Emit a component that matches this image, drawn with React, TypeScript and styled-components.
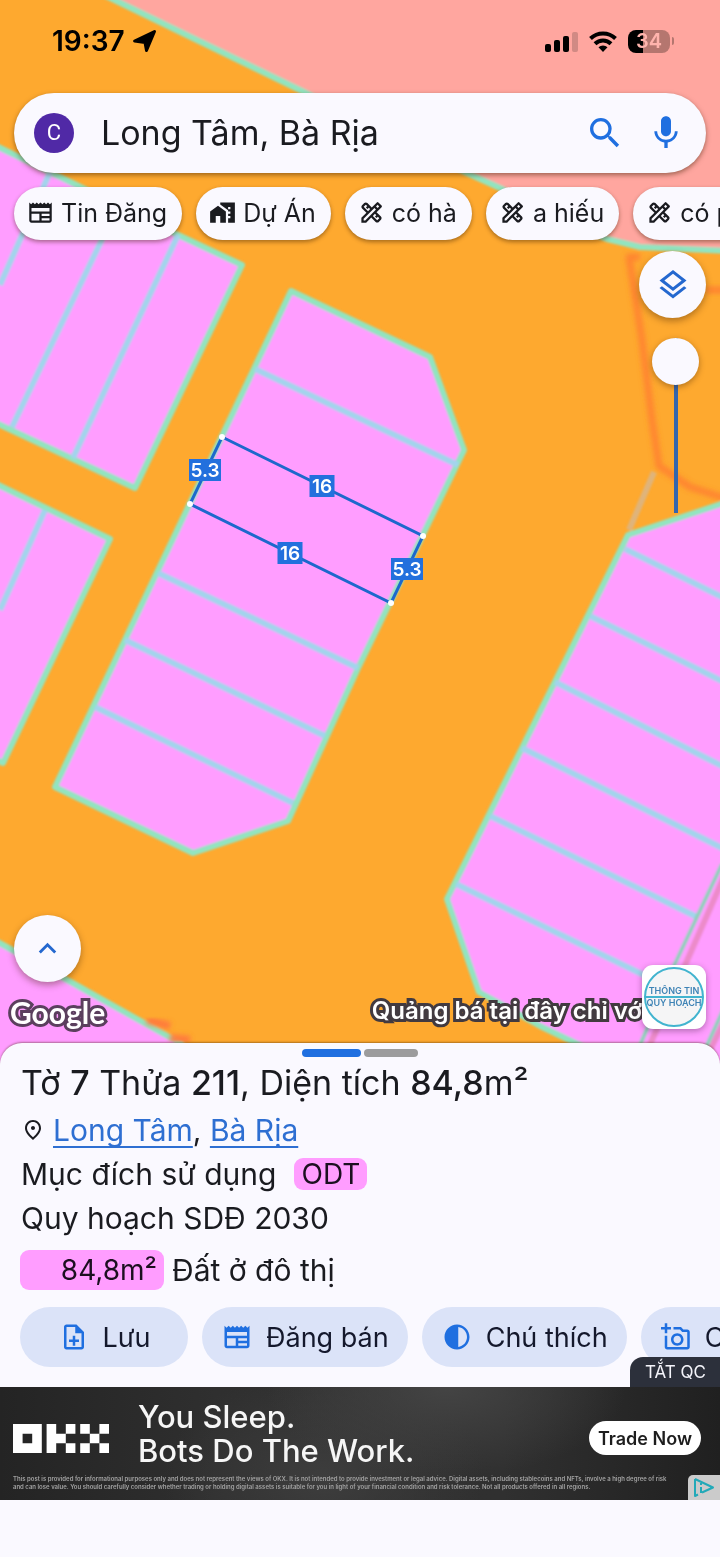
import React, { useState } from 'react';
import styled, { createGlobalStyle, css } from 'styled-components';
import {
  MdSearch,
  MdMic,
  MdOutlineLayers,
  MdOutlineNewspaper,
  MdHomeWork,
  MdOutlineDesignServices,
  MdOutlineNoteAdd,
  MdContrast,
  MdOutlineAddAPhoto,
  MdKeyboardArrowUp,
  MdOutlinePlace,
} from 'react-icons/md';

const ink = '#1a1b20';
const surface = '#faf9ff';
const blue = '#1f6fe0';
const pink = '#ff9dff';
const orange = '#fea92f';

const GlobalStyle = createGlobalStyle`
  *, *::before, *::after { box-sizing: border-box; }
  body {
    margin: 0;
    background: ${surface};
    color: ${ink};
    font-family: Inter, "Liberation Sans", sans-serif;
  }
  button, input { font: inherit; color: inherit; }
  button { border: 0; margin: 0; padding: 0; cursor: pointer; }
  svg { display: block; flex: none; }
`;

const Screen = styled.main`
  display: flex;
  flex-direction: column;
  min-height: 100vh;
  overflow: hidden;
`;

/* ---------- map ---------- */

const MapSection = styled.section`
  position: relative;
  isolation: isolate;
  flex: 1;
  display: flex;
  flex-direction: column;
  padding-bottom: 34px;
  background: ${orange};
`;

const MapCanvas = styled.svg`
  position: absolute;
  inset: 0;
  z-index: -1;
  width: 100%;
  height: 100%;
`;

const StatusBar = styled.header`
  display: flex;
  align-items: center;
  justify-content: space-between;
  height: 93px;
  padding: 0 46px 11px 52px;
  color: #000;
`;

const StatusGroup = styled.div<{ $gap: number }>`
  display: flex;
  align-items: center;
  gap: ${(p) => p.$gap}px;
`;

const Clock = styled.span`
  font-size: 28px;
  font-weight: 600;
  line-height: 32px;
`;

const Battery = styled.span`
  display: flex;
  align-items: center;
  gap: 2px;
  &::after {
    content: '';
    width: 2px;
    height: 8px;
    border-radius: 0 2px 2px 0;
    background: #b5766f;
  }
`;

const BatteryBody = styled.span`
  width: 42px;
  border-radius: 8px;
  background: linear-gradient(90deg, #000 15px, #b5766f 15px);
  color: #ffb4ad;
  font-size: 20px;
  font-weight: 600;
  line-height: 23px;
  text-align: center;
`;

const SearchBar = styled.form`
  display: flex;
  align-items: center;
  height: 80px;
  margin: 0 14px;
  padding: 0 20px;
  border-radius: 40px;
  background: ${surface};
  box-shadow: 0 2px 5px rgba(60, 30, 0, 0.5);
`;

const Avatar = styled.span`
  width: 40px;
  border-radius: 50%;
  background: #5029a6;
  color: #fff;
  font-family: Roboto, sans-serif;
  font-size: 22px;
  line-height: 40px;
  text-align: center;
`;

const SearchInput = styled.input`
  flex: 1;
  min-width: 0;
  margin-left: 27px;
  padding: 0 0 2px;
  border: 0;
  outline: 0;
  background: none;
  font-size: 34px;
`;

const IconButton = styled.button`
  display: grid;
  place-items: center;
  width: 40px;
  height: 40px;
  margin-left: 21px;
  background: none;
  color: ${blue};
`;

const ChipRow = styled.nav`
  display: flex;
  gap: 14px;
  margin-top: 14px;
  padding-left: 14px;
`;

const Chip = styled.button`
  flex: none;
  display: flex;
  align-items: center;
  gap: 7px;
  height: 53px;
  padding: 0 15px 2px 13px;
  border-radius: 27px;
  background: ${surface};
  box-shadow: 0 2px 4px rgba(60, 30, 0, 0.45);
  font-size: 25px;
  white-space: nowrap;
`;

const MapTools = styled.div`
  display: flex;
  flex-direction: column;
  align-items: flex-end;
  gap: 20px;
  margin-top: 11px;
  padding-right: 14px;
`;

const RoundButton = styled.button`
  display: grid;
  place-items: center;
  width: 67px;
  height: 67px;
  border-radius: 50%;
  background: ${surface};
  color: #2468cf;
  box-shadow: 0 3px 7px rgba(60, 30, 0, 0.4);
`;

const thumb = css`
  width: 47px;
  height: 47px;
  border: 0;
  border-radius: 50%;
  background: ${surface};
  box-shadow: 0 2px 6px rgba(60, 30, 0, 0.4);
`;

const OpacitySlider = styled.input`
  appearance: none;
  writing-mode: vertical-lr;
  width: 47px;
  height: 175px;
  margin: 0 7px 0 0;
  background: linear-gradient(#3566ad, #3566ad) center / 4px 100% no-repeat;
  &::-webkit-slider-thumb {
    appearance: none;
    ${thumb}
  }
  &::-moz-range-thumb {
    ${thumb}
  }
`;

const MapFooter = styled.footer`
  display: flex;
  align-items: flex-end;
  justify-content: space-between;
  margin-top: auto;
  padding: 0 14px 0 10px;
`;

const FooterStart = styled.div`
  display: flex;
  flex-direction: column;
  gap: 13px;
  padding-left: 4px;
`;

const outlined = css`
  color: #fff;
  paint-order: stroke fill;
  stroke-linejoin: round;
  white-space: nowrap;
`;

const GoogleMark = styled.span`
  ${outlined}
  margin-left: -4px;
  font-family: Lato, sans-serif;
  font-size: 30px;
  font-weight: 700;
  line-height: 34px;
  -webkit-text-stroke: 6px #5b3f5e;
`;

const Promo = styled.div`
  display: flex;
  align-items: flex-end;
`;

const Marquee = styled.span`
  ${outlined}
  padding-left: 6px;
  overflow: hidden;
  font-size: 24px;
  font-weight: 600;
  line-height: 36px;
  -webkit-text-stroke: 6px #423a40;
`;

const PromoBadge = styled.a`
  display: grid;
  place-items: center;
  width: 64px;
  height: 64px;
  border-radius: 11px;
  background: #fff;
  box-shadow: 0 2px 6px rgba(60, 30, 60, 0.4);
`;

/* ---------- bottom sheet ---------- */

const Sheet = styled.section`
  position: relative;
  display: flex;
  flex-direction: column;
  margin-top: -20px;
  padding: 6px 20px 20px;
  border-radius: 22px 22px 0 0;
  background: ${surface};
  box-shadow: 0 -1px 2px rgba(60, 30, 0, 0.4);
`;

const Pager = styled.div`
  display: flex;
  justify-content: center;
  gap: 3px;
`;

const PagerBar = styled.span<{ $active?: boolean }>`
  width: ${(p) => (p.$active ? 59 : 54)}px;
  height: 8px;
  border-radius: 4px;
  background: ${(p) => (p.$active ? blue : '#9c9c9d')};
`;

const Title = styled.h1`
  margin: 6px 0 5px 1px;
  font-size: 34px;
  font-weight: 400;
  line-height: 40px;
  b { font-weight: 500; }
`;

const Line = styled.p<{ $gap?: number; $tall?: boolean }>`
  display: flex;
  align-items: center;
  gap: ${(p) => p.$gap ?? 0}px;
  margin: ${(p) => (p.$tall ? 8 : 0)}px 0 0 ${(p) => (p.$tall ? 0 : 1)}px;
  font-size: 30px;
  line-height: 44px;
  white-space: pre;
`;

const Place = styled.a`
  color: #2e6fd2;
  text-decoration: underline;
  text-decoration-thickness: 2px;
  text-decoration-skip-ink: none;
  text-underline-offset: 5px;
`;

const Tag = styled.span<{ $wide?: boolean }>`
  min-width: ${(p) => (p.$wide ? 144 : 0)}px;
  padding: 0 7px;
  border-radius: 9px;
  background: ${pink};
  color: #1c0f20;
  font-size: 28px;
  line-height: ${(p) => (p.$wide ? 40 : 32)}px;
  text-align: right;
`;

const Actions = styled.div`
  display: flex;
  gap: 14px;
  margin: 15px -20px 0 0;
  overflow: hidden;
`;

const Action = styled.button`
  flex: none;
  display: flex;
  align-items: center;
  justify-content: center;
  gap: 14px;
  min-width: 168px;
  height: 60px;
  padding: 0 19px 0 20px;
  border-radius: 30px;
  background: #dbe3f8;
  color: #14182c;
  font-size: 27px;
  white-space: nowrap;
  svg { color: ${blue}; }
`;

/* ---------- advertisement ---------- */

const Ad = styled.aside`
  position: relative;
  height: 113px;
  margin-bottom: 57px;
  padding: 16px 19px 0 13px;
  background:
    radial-gradient(ellipse 180px 90px at 62% 0%, #444 0%, transparent 100%),
    radial-gradient(ellipse 160px 110px at 45% 80%, #3d3d3d 0%, transparent 100%),
    linear-gradient(90deg, #242424, #2f2f2f 30%, #303030 70%, #202020);
  color: #f6f6f6;
`;

const AdOff = styled.button`
  position: absolute;
  right: 0;
  bottom: 100%;
  height: 30px;
  padding: 0 14px 0 15px;
  border-radius: 13px 0 0 0;
  background: #2c303b;
  color: #f4f4fa;
  font-size: 17px;
`;

const AdMain = styled.div`
  display: flex;
  align-items: center;
  height: 70px;
`;

const AdHeadline = styled.p`
  flex: 1;
  margin: 0 0 0 29px;
  padding-bottom: 8px;
  font-size: 31px;
  font-weight: 500;
  line-height: 34px;
`;

const AdCta = styled.button`
  height: 34px;
  padding: 0 9px;
  border-radius: 17px;
  background: #fff;
  color: #1d1d1d;
  font-size: 18px;
  font-weight: 600;
`;

const AdSmall = styled.p`
  margin: 2px 0 0;
  color: #a2a2a2;
  font-size: 6px;
  font-weight: 600;
  line-height: 8px;
  white-space: nowrap;
`;

const AdChoices = styled.a`
  position: absolute;
  right: 0;
  bottom: 0;
  display: grid;
  place-items: center;
  width: 32px;
  height: 25px;
  border-radius: 5px 0 0 0;
  background: #cbcbcb;
`;

/* ---------- drawings ---------- */

const GREEN = '#92e4c0';
const PALE = '#a3d4ec';

const measures = [
  { x: 205, y: 470, w: 32, t: '5.3' },
  { x: 322, y: 486, w: 25, t: '16' },
  { x: 290, y: 553, w: 25, t: '16' },
  { x: 407, y: 569, w: 32, t: '5.3' },
];

const corners = [
  [222, 437],
  [423, 536],
  [391, 603],
  [190, 504],
];

function ParcelMap() {
  return (
    <MapCanvas viewBox="0 0 720 1063" preserveAspectRatio="xMidYMin slice" aria-hidden="true">
      <defs>
        <filter id="tile" x="-2%" y="-2%" width="104%" height="104%">
          <feGaussianBlur stdDeviation="1" />
        </filter>
        <filter id="smudge">
          <feGaussianBlur stdDeviation="2" />
        </filter>
      </defs>
      <rect width="720" height="1063" fill={orange} />
      <g filter="url(#tile)" strokeLinejoin="round" strokeWidth="6">
        <path
          d="M98-8 302 91 467 173 500 188 570 224 607 239 640 247 730 251V-8Z"
          fill="#ffa69f"
          stroke={GREEN}
          strokeWidth="6"
        />
        <g fill="none" stroke="#ff7a30" strokeWidth="7" filter="url(#smudge)" opacity=".75">
          <path d="M640 257H629L642 340 652 420 659 466 690 487 730 500M706 290H730" />
        </g>
        <path d="M654 472 629 530" stroke="#dfb47c" fill="none" />
        <g fill={pink} stroke={GREEN}>
          <path d="M-8 144 50 172 178 235 242 265 135 488-8 421Z" />
          <path d="M-8 482 110 539 3 763-8 758Z" />
          <path d="M291 291 430 357 464 450 358 668 288 821 193 853 55 787Z" />
          <path d="M730 501 628 535 447 899 479 992 540 1026 590 1050 620 1075H730Z" />
          <path d="M-8 939 60 976 178 1042 215 1075H-8Z" />
        </g>
        <path
          d="M50 172 0 285M118 206 12 427M178 235 73 458M45 510 0 610M255 369 458 465M158 573 358 668M125 640 325 736M95 707 293 803M625 549 730 601M590 616 730 685M555 682 730 770M522 748 730 852M490 816 697 917M456 884 650 978"
          fill="none"
          stroke={PALE}
        />
        <g fill="none">
          <path d="M727 870 645 1056M730 1010 705 1060" stroke="#e07fa5" opacity=".6" />
          <path d="M722 864 697 917 672 970 638 1050M724 1008 702 1056" stroke="#8fd0bb" strokeWidth="4" />
        </g>
        <path d="M147 1020 170 1026M170 1038 190 1040" stroke="#ff7a3c" strokeWidth="8" filter="url(#smudge)" />
      </g>
      <polygon
        points={corners.map((c) => c.join(',')).join(' ')}
        fill="none"
        stroke="#1d68cc"
        strokeWidth="3"
      />
      {corners.map(([x, y]) => (
        <circle key={`${x}-${y}`} cx={x} cy={y} r="3" fill="#fff" />
      ))}
      {measures.map((m) => (
        <g key={`${m.x}-${m.y}`}>
          <rect x={m.x - m.w / 2} y={m.y - 11} width={m.w} height="22" fill="#2370dd" />
          <text
            x={m.x}
            y={m.y + 7}
            fill="#fff"
            fontFamily="Inter, sans-serif"
            fontSize="19"
            fontWeight="600"
            textAnchor="middle"
          >
            {m.t}
          </text>
        </g>
      ))}
    </MapCanvas>
  );
}

const LocationArrow = () => (
  <svg width="25" height="24" viewBox="0 0 25 24" aria-hidden="true">
    <path
      d="M22.500 2.500 14.500 21.500 13 13.500 2.600 12Z"
      fill="#000"
      stroke="#000"
      strokeWidth="3"
      strokeLinejoin="round"
    />
  </svg>
);

const Signal = () => (
  <svg width="33" height="21" viewBox="0 0 33 21" aria-hidden="true">
    <rect x="0" y="13" width="6" height="8" rx="2" />
    <rect x="9" y="9" width="6" height="12" rx="2" />
    <rect x="18" y="5" width="6" height="16" rx="2" />
    <rect x="27" y="1" width="6" height="20" rx="2" fill="#d18a84" />
  </svg>
);

const Wifi = () => (
  <svg width="28" height="21" viewBox="0 0 28 21" aria-hidden="true">
    <g fill="none" stroke="#000" strokeWidth="4">
      <path d="M1.500 7.500a18 18 0 0 1 25 0" />
      <path d="M6 12.800a11.500 11.500 0 0 1 16 0" />
    </g>
    <path d="M14 21l-4.500-4.700a6.500 6.500 0 0 1 9 0Z" />
  </svg>
);

const OkxLogo = () => (
  <svg width="96" height="29" viewBox="0 0 30 9" preserveAspectRatio="none" role="img" aria-label="OKX">
    <path
      fill="#fff"
      fillRule="evenodd"
      d="M0 0h9v9H0ZM3 3v3h3V3ZM10.500 0h3v9h-3ZM13.500 3h3v3h-3ZM16.500 0h3v3h-3ZM16.500 6h3v3h-3ZM21 0h3v3h-3ZM27 0h3v3h-3ZM24 3h3v3h-3ZM21 6h3v3h-3ZM27 6h3v3h-3Z"
    />
  </svg>
);

const PlanningLogo = () => (
  <svg width="62" height="62" viewBox="0 0 62 62" role="img" aria-label="Thông tin quy hoạch">
    <circle cx="31" cy="31" r="29" fill="#f5f5f6" stroke="#42b4cf" strokeWidth="2" />
    <path d="M2 31h58" stroke="#42b4cf" strokeWidth="2" />
    <g fill="#3e83b5" fontFamily="Inter, sans-serif" fontSize="9" fontWeight="600" textAnchor="middle">
      <text x="31" y="28">THÔNG TIN</text>
      <text x="31" y="40">QUY HOẠCH</text>
    </g>
  </svg>
);

const chips = [
  { icon: MdOutlineNewspaper, label: 'Tin Đăng' },
  { icon: MdHomeWork, label: 'Dự Án' },
  { icon: MdOutlineDesignServices, label: 'có hà' },
  { icon: MdOutlineDesignServices, label: 'a hiếu' },
  { icon: MdOutlineDesignServices, label: 'có phú' },
];

const actions = [
  { icon: MdOutlineNoteAdd, label: 'Lưu' },
  { icon: MdOutlineNewspaper, label: 'Đăng bán' },
  { icon: MdContrast, label: 'Chú thích' },
  { icon: MdOutlineAddAPhoto, label: 'Chụp ảnh' },
];

export default function App() {
  const [query, setQuery] = useState('Long Tâm, Bà Rịa');
  const [opacity, setOpacity] = useState(0);

  return (
    <Screen>
      <GlobalStyle />
      <MapSection>
        <ParcelMap />
        <StatusBar>
          <StatusGroup $gap={7}>
            <Clock>19:37</Clock>
            <LocationArrow />
          </StatusGroup>
          <StatusGroup $gap={11}>
            <Signal />
            <Wifi />
            <Battery>
              <BatteryBody>34</BatteryBody>
            </Battery>
          </StatusGroup>
        </StatusBar>

        <SearchBar onSubmit={(e) => e.preventDefault()}>
          <Avatar>C</Avatar>
          <SearchInput
            aria-label="Tìm kiếm"
            value={query}
            onChange={(e) => setQuery(e.target.value)}
          />
          <IconButton type="submit" aria-label="Tìm">
            <MdSearch size={40} />
          </IconButton>
          <IconButton type="button" aria-label="Giọng nói">
            <MdMic size={40} />
          </IconButton>
        </SearchBar>

        <ChipRow>
          {chips.map(({ icon: Icon, label }) => (
            <Chip key={label} type="button">
              <Icon size={27} />
              {label}
            </Chip>
          ))}
        </ChipRow>

        <MapTools>
          <RoundButton type="button" aria-label="Lớp bản đồ">
            <MdOutlineLayers size={36} />
          </RoundButton>
          <OpacitySlider
            type="range"
            aria-label="Độ mờ"
            min={0}
            max={100}
            value={opacity}
            onChange={(e) => setOpacity(Number(e.target.value))}
          />
        </MapTools>

        <MapFooter>
          <FooterStart>
            <RoundButton type="button" aria-label="Mở rộng">
              <MdKeyboardArrowUp size={35} />
            </RoundButton>
            <GoogleMark>Google</GoogleMark>
          </FooterStart>
          <Promo>
            <Marquee>Quảng bá tại đây chỉ vớ</Marquee>
            <PromoBadge href="#">
              <PlanningLogo />
            </PromoBadge>
          </Promo>
        </MapFooter>
      </MapSection>

      <Sheet>
        <Pager>
          <PagerBar $active />
          <PagerBar />
        </Pager>
        <Title>
          Tờ <b>7</b> Thửa <b>211</b>, Diện tích <b>84,8</b>m²
        </Title>
        <Line $gap={8}>
          <MdOutlinePlace size={24} />
          <span>
            <Place href="#">Long Tâm</Place>, <Place href="#">Bà Rịa</Place>
          </span>
        </Line>
        <Line $gap={18}>
          Mục đích sử dụng
          <Tag>ODT</Tag>
        </Line>
        <Line>Quy hoạch SDĐ 2030</Line>
        <Line $tall $gap={8}>
          <Tag $wide>84,8m²</Tag>
          Đất ở đô thị
        </Line>
        <Actions>
          {actions.map(({ icon: Icon, label }) => (
            <Action key={label} type="button">
              <Icon size={30} />
              {label}
            </Action>
          ))}
        </Actions>
      </Sheet>

      <Ad>
        <AdOff type="button">TẮT QC</AdOff>
        <AdMain>
          <OkxLogo />
          <AdHeadline>
            You Sleep.
            <br />
            Bots Do The Work.
          </AdHeadline>
          <AdCta type="button">Trade Now</AdCta>
        </AdMain>
        <AdSmall>
          This post is provided for informational purposes only and does not represent the views of OKX. It is not
          intended to provide investment or legal advice. Digital assets, including stablecoins and NFTs, involve a
          high degree of risk
          <br />
          and can lose value. You should carefully consider whether trading or holding digital assets is suitable for
          you in light of your financial condition and risk tolerance. Not all products offered in all regions.
        </AdSmall>
        <AdChoices href="#" aria-label="AdChoices">
          <svg width="22" height="21" viewBox="0 0 22 21">
            <path d="M2 2 20 10.500 9 15.500M2 2V19L5 17.500" fill="none" stroke="#22a9b8" strokeWidth="2" strokeLinejoin="round" />
            <path d="M8 6v2M8 10v6" stroke="#22a9b8" strokeWidth="2" />
          </svg>
        </AdChoices>
      </Ad>
    </Screen>
  );
}
